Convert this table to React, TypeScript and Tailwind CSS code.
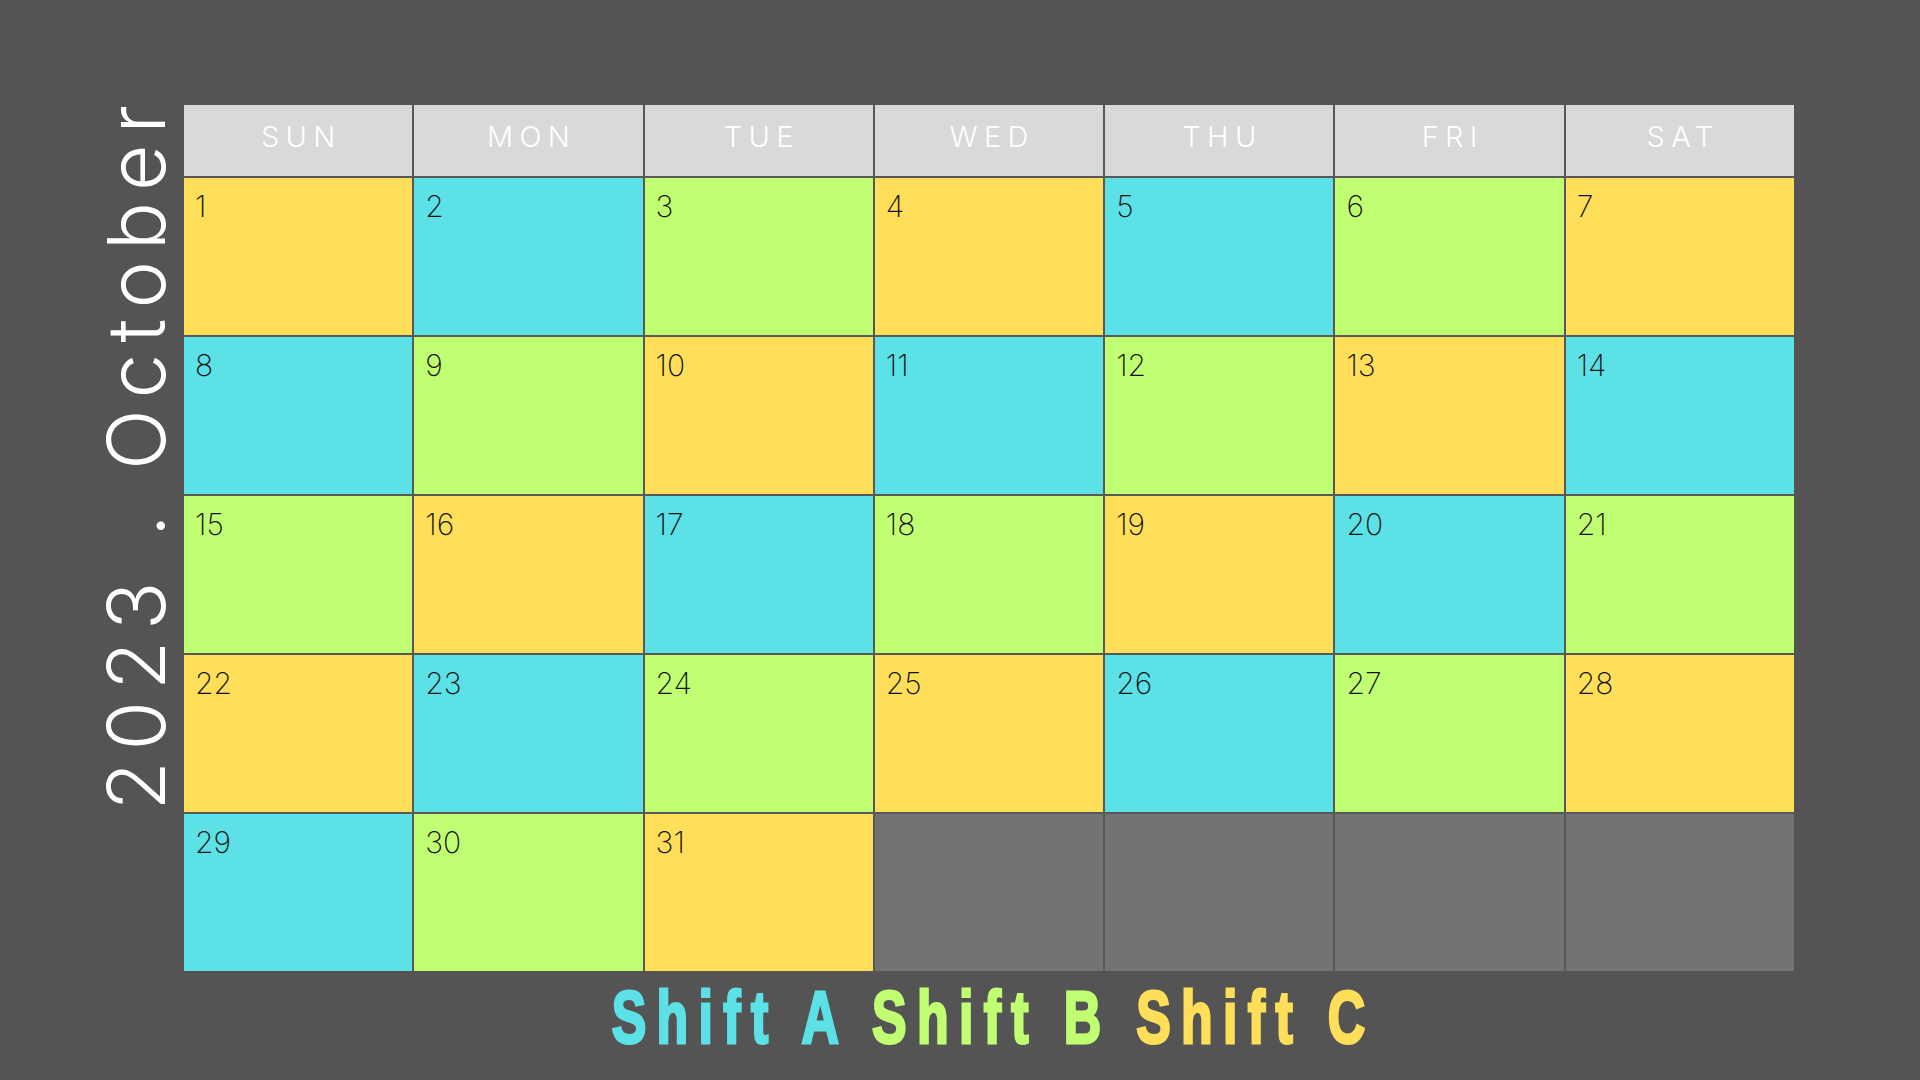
import React from "react";

const DAYS = ["SUN", "MON", "TUE", "WED", "THU", "FRI", "SAT"];

// shift colours, cycling yellow -> cyan -> green from the 1st
const SHIFT_BG = ["bg-[#ffde59]", "bg-[#5ce1e6]", "bg-[#c1ff72]"];

function DayCell({ day }: { day: number | null }) {
  if (day === null) {
    return <div className="bg-[#737373]" />;
  }
  return (
    <div className={`${SHIFT_BG[(day - 1) % 3]} pl-[11px] pt-[13px]`}>
      <span className="text-[30px] leading-none font-extralight text-[#111]">{day}</span>
    </div>
  );
}

export default function App() {
  const cells: (number | null)[] = [];
  for (let d = 1; d <= 31; d++) cells.push(d);
  while (cells.length < 35) cells.push(null);

  return (
    <div
      className="w-[1920px] h-[1080px] bg-[#545454] flex flex-col overflow-hidden"
      style={{ fontFamily: "Inter, 'Noto Sans', sans-serif" }}
    >
      <div className="flex pt-[105px]">
        {/* Vertical title - reads bottom to top */}
        <div className="w-[184px] flex justify-start pl-[96px]">
          <div className="[writing-mode:vertical-rl] rotate-180 text-white text-[80px] font-light leading-[80px] tracking-[0.137em] whitespace-nowrap self-start mt-[-11px]">
            2023 . October
          </div>
        </div>

        {/* Calendar grid */}
        <div className="w-[1610px] grid grid-cols-7 gap-[2px] bg-[#585858] grid-rows-[71px_repeat(5,157px)]">
          {DAYS.map((d) => (
            <div key={d} className="bg-[#d9d9d9] flex items-center justify-center pb-[8px]">
              <span className="text-white text-[29px] font-light tracking-[0.22em] pl-[0.22em]">{d}</span>
            </div>
          ))}
          {cells.map((c, i) => (
            <DayCell key={i} day={c} />
          ))}
        </div>
      </div>

      {/* Legend */}
      <div className="flex justify-center pl-[68px] pt-[4px]">
        <div
          className="text-[74px] leading-[86px] font-bold tracking-[0.2em] scale-x-[0.7] origin-center whitespace-nowrap [-webkit-text-stroke:3px_currentColor]"
          style={{ fontFamily: "'Liberation Sans', Arial, sans-serif" }}
        >
          <span className="text-[#5ce1e6]">Shift A</span>{" "}
          <span className="text-[#c1ff72]">Shift B</span>{" "}
          <span className="text-[#ffde59]">Shift C</span>
        </div>
      </div>
    </div>
  );
}
